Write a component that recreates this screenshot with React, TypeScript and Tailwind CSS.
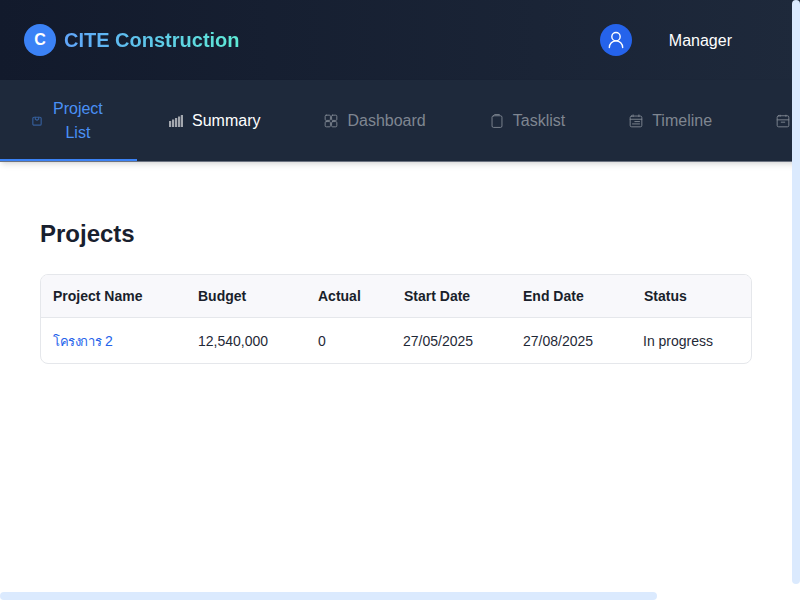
import React from "react";

const Ico = ({ c, cls = "w-3.5 h-3.5", sw = 1.6 }: { c: React.ReactNode; cls?: string; sw?: number }) => (
  <svg viewBox="0 0 24 24" fill="none" stroke="currentColor" strokeWidth={sw} strokeLinecap="round" strokeLinejoin="round" className={`${cls} shrink-0`}>{c}</svg>
);

const tabs: { label: string; icon: React.ReactNode }[] = [
  { label: "Dashboard", icon: <><rect x="2" y="2" width="9" height="9" rx="1.8" /><rect x="13" y="2" width="9" height="9" rx="1.8" /><rect x="2" y="13" width="9" height="9" rx="1.8" /><rect x="13" y="13" width="9" height="9" rx="1.8" /></> },
  { label: "Tasklist", icon: <><rect x="3.5" y="3" width="17" height="20" rx="2.5" /><path d="M8 1h8" /></> },
  { label: "Timeline", icon: <><rect x="2" y="3.5" width="20" height="18.5" rx="2.5" /><path d="M2 9h20M7 1.5v3M17 1.5v3M10 13h8M6 17h12" /></> },
];

export default function App() {
  return (
    <div className="relative w-[800px] h-[600px] overflow-hidden bg-white font-['Liberation_Sans',Arial,sans-serif]">
      <header className="w-full h-20 flex items-center justify-between pl-6 pr-[68px] bg-gradient-to-r from-[#121a2c] to-[#1e293b]">
        <div className="flex items-center gap-2">
          <div className="w-8 h-8 rounded-full bg-[#3b82f6] text-white font-bold text-base flex items-center justify-center">C</div>
          <span className="text-xl font-bold bg-gradient-to-r from-[#60a5fa] to-[#5eead4] bg-clip-text text-transparent">CITE Construction</span>
        </div>
        <div className="flex items-center gap-[37px]">
          <div className="w-8 h-8 rounded-full bg-[#2563eb] text-white flex items-center justify-center">
            <Ico cls="w-5 h-5" sw={1.7} c={<><circle cx="12" cy="8" r="5" /><path d="M20 21a8 8 0 0 0-16 0" /></>} />
          </div>
          <span className="text-white text-base pt-0.5">Manager</span>
        </div>
      </header>
      <nav className="h-[82px] flex overflow-hidden bg-[#1e293b] border-b border-[#6b7280] shadow-md">
        <div className="w-[137px] h-[81px] shrink-0 flex items-center gap-[11px] pl-8 pt-0.5 text-[#4a90f5] border-b-2 border-[#3b82f6] text-base leading-6">
          <span className="opacity-50"><Ico cls="w-2.5 h-2.5" sw={2.8} c={<><rect x="2" y="3" width="20" height="19" rx="3" /><path d="M8 3v5l4 2 4-2V3" /></>} /></span>
          <span className="text-center">Project<br />List</span>
        </div>
        <div className="flex items-center gap-[9px] px-8 text-white text-base shrink-0">
          <svg viewBox="0 0 14 12" className="w-3.5 h-3 shrink-0 text-[#a3a7ae]" fill="currentColor"><rect x="0" y="6" width="2.2" height="6" /><rect x="3" y="4.5" width="2.2" height="7.5" /><rect x="6" y="3" width="2.2" height="9" /><rect x="9" y="1.5" width="2.2" height="10.5" /><rect x="11.8" y="0" width="2.2" height="12" /></svg>
          Summary
        </div>
        {tabs.map((t) => (
          <div key={t.label} className="flex items-center gap-[9px] px-8 text-[#7f8691] text-base shrink-0">
            <Ico c={t.icon} />
            {t.label}
          </div>
        ))}
        <div className="flex items-center pl-8 text-[#7f8691] shrink-0">
          <Ico c={<><rect x="2" y="3" width="20" height="19" rx="2.5" /><path d="M2 10h20M9 14h6M7 2v2M17 2v2" /></>} />
        </div>
      </nav>
      <main className="w-[792px] px-10 pt-[56px]">
        <h1 className="text-2xl font-bold text-[#18202e] leading-8 mb-6">Projects</h1>
        <div className="border border-[#e5e7eb] rounded-lg overflow-hidden text-sm">
          <div className="h-[43px] flex items-center bg-[#f8f8fb] border-b border-[#e5e7eb] font-bold text-[#1a1f2b]">
            <span className="w-[157px] pl-3">Project Name</span>
            <span className="w-[120px]">Budget</span>
            <span className="w-[86px]">Actual</span>
            <span className="w-[119px]">Start Date</span>
            <span className="w-[121px]">End Date</span>
            <span>Status</span>
          </div>
          <div className="h-[45px] flex items-center text-[#1f2937]">
            <span className="w-[157px] pl-3 pt-px text-[#2563eb]"><span className="text-[13px] tracking-[-0.4px]">โครงการ</span> 2</span>
            <span className="w-[120px]">12,540,000</span>
            <span className="w-[85px]">0</span>
            <span className="w-[120px]">27/05/2025</span>
            <span className="w-[120px]">27/08/2025</span>
            <span>In progress</span>
          </div>
        </div>
      </main>
      <div className="absolute right-0 top-0 w-2 h-[584px] rounded-full bg-[#dbeafe]" />
      <div className="absolute left-0 bottom-0 h-2 w-[657px] rounded-full bg-[#dbeafe]" />
    </div>
  );
}
